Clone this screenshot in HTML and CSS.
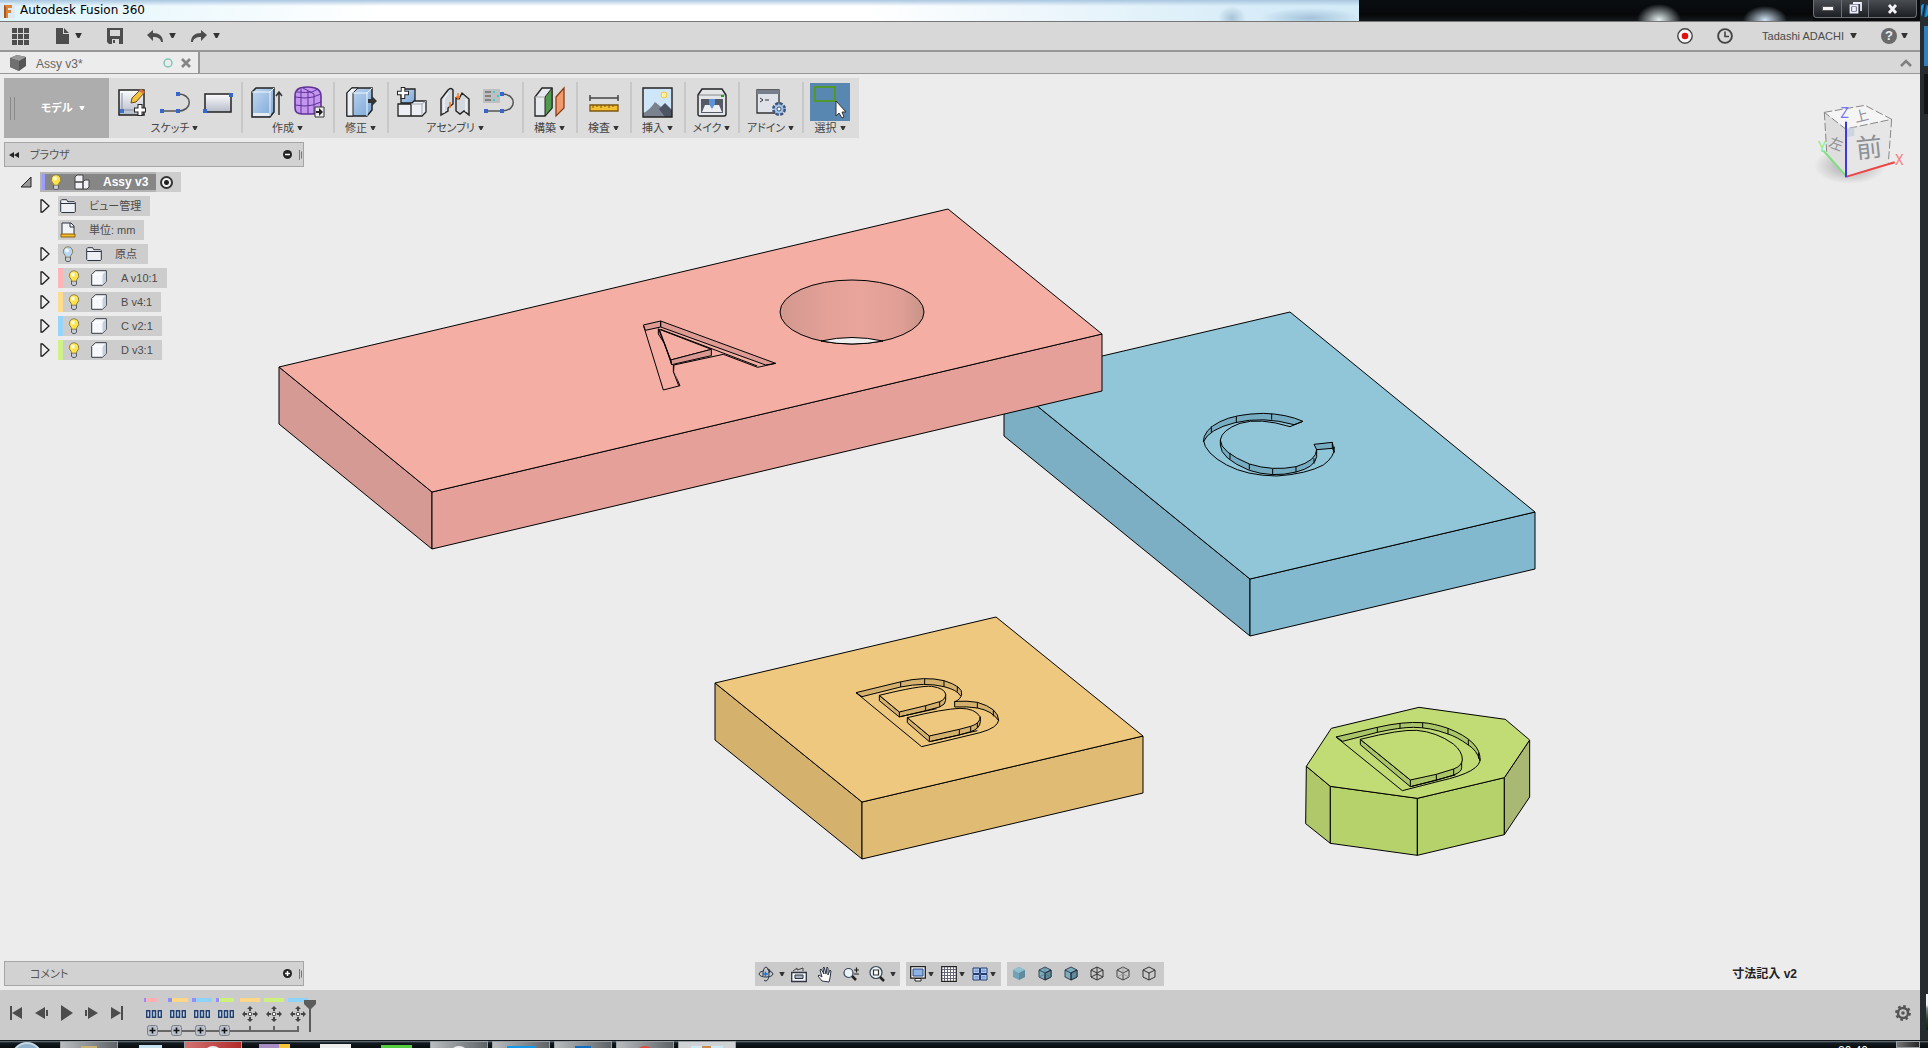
FILE: index.html
```html
<!DOCTYPE html>
<html lang="ja">
<head>
<meta charset="utf-8">
<title>Autodesk Fusion 360</title>
<link rel="stylesheet" href="styles.css">
</head>
<body>
<svg class="defs" aria-hidden="true">
  <defs>
    <linearGradient id="blueG" x1="0" y1="0" x2="1" y2="1"><stop offset="0" stop-color="#c3d9f0"/><stop offset="1" stop-color="#7ba6d8"/></linearGradient>
    <linearGradient id="greyG" x1="0" y1="0" x2="0" y2="1"><stop offset="0" stop-color="#fdfdfe"/><stop offset="1" stop-color="#b4bac8"/></linearGradient>
    <linearGradient id="wallG" x1="0" x2="1"><stop offset="0" stop-color="#d3978e"/><stop offset=".3" stop-color="#e2a097"/><stop offset=".55" stop-color="#e9a59c"/><stop offset=".85" stop-color="#df9e95"/><stop offset="1" stop-color="#c79488"/></linearGradient>
    <radialGradient id="shadeG"><stop offset="0" stop-color="#777" stop-opacity=".6"/><stop offset="1" stop-color="#777" stop-opacity="0"/></radialGradient>
  </defs>
  <symbol id="caret" viewBox="0 0 8 6"><path d="M0 0h8L5 6H3z"/></symbol>
  <symbol id="bulb" viewBox="0 0 12 16"><path d="M3.500 10.500v3.500l1 1.500h3l1-1.500v-3.500z" fill="#c9ccd4" stroke="#555c6c"/><path d="M6 .7a4.800 4.800 0 0 0-3 8.500l1 2h4l1-2A4.800 4.800 0 0 0 6 .7z" fill="currentColor" stroke="#8b8156"/><circle cx="5" cy="4.500" r="2" fill="#fff" opacity=".8"/></symbol>
  <symbol id="body" viewBox="0 0 16 16"><path d="M.7 4.500 4.500.7h10.800v10.800l-3.800 3.800H.7z" fill="#f7f8fb" stroke="#333947" stroke-linejoin="round"/><path d="M11.500 4.500 15 1v10.500L11.500 15z" fill="#c9cedb"/><path d="M1.500 4.500h10" stroke="#fff"/></symbol>
  <symbol id="folder" viewBox="0 0 16 14"><path d="M.7 12.500V1.700L1.700.7h5l1 2h6.600l1 1v9l-1 .8H1.700z" fill="#eef0f5" stroke="#2c3340"/><path d="M1 4.500h14" stroke="#2c3340"/></symbol>
  <symbol id="twist" viewBox="0 0 10 14"><path d="M1 1h1.500L9 7l-6.500 6H1z" fill="#f0f0f0" stroke="#222" stroke-width="1.300"/></symbol>
  <symbol id="grip" viewBox="0 0 3 12"><path d="M.5 1v10M2.500 2.500v7" stroke="#777"/></symbol>
  <symbol id="hex" viewBox="0 0 14 15"><path d="M7 1 13 4v7l-6 3-6-3V4z"/></symbol>
  <symbol id="pattern" viewBox="0 0 16 8"><g fill="#b9d3f2" stroke="#26406e" stroke-width="1.400"><path d="M.7.7h3v6.500h-3zM6.500.7h3v6.500h-3zM12.300.7h3v6.500h-3z"/></g></symbol>
  <symbol id="move" viewBox="0 0 16 16"><path d="M8 0l3 3H5zM8 16l3-3H5zM0 8l3-3v6zM16 8l-3-3v6zM7 3h2v2H7zM7 11h2v2H7zM3 7h2v2H3zM11 7h2v2h-2z" fill="#444"/><circle cx="8" cy="8" r="1.800" fill="#fff" stroke="#444"/></symbol>
  <symbol id="plus" viewBox="0 0 11 11"><rect x=".5" y=".5" width="10" height="10" rx="2" fill="#b9bfcb" stroke="#7b7f88"/><path d="M5.500 2.500v6M2.500 5.500h6" stroke="#111" stroke-width="1.600"/></symbol>
</svg>

<div class="desktop">
<div class="window">
  <header class="titlebar">
    <svg class="logo" width="15" height="16" viewBox="0 0 15 16"><path d="M0 0h15v15H0z" fill="#dcebf3"/><path d="M4 2h8v3H8v2h3v3H8v5H4z" fill="#d9853b"/><path d="M4 2l2 2v11H4z" fill="#a9561f"/></svg>
    <h1>Autodesk Fusion 360</h1>
    <div class="glass"></div>
    <div class="winbtns">
      <button aria-label="最小化"><svg width="12" height="5"><path d="M.5.5h11v4H.500z" fill="#f4f4f8" stroke="#555"/></svg></button>
      <button aria-label="元に戻す"><svg width="13" height="13"><path d="M4 1h8v8M1.500 3.500h7v7h-7zM4 6h2v2H4z" fill="none" stroke="#eef" stroke-width="1.800"/></svg></button>
      <button class="close" aria-label="閉じる"><svg width="12" height="10"><path d="M2 1l7 8M9 1 2 9" stroke="#f4f4f8" stroke-width="2.800"/></svg></button>
    </div>
  </header>

  <div class="quickbar">
    <button aria-label="データパネル"><svg width="17" height="17"><path d="M0 0h5v5H0zM6 0h5v5H6zM12 0h5v5h-5zM0 6h5v5H0zM6 6h5v5H6zM12 6h5v5h-5zM0 12h5v5H0zM6 12h5v5H6zM12 12h5v5h-5z" fill="#4d4d4d"/></svg></button>
    <button class="q-file" aria-label="ファイル"><svg width="13" height="16"><path d="M0 0h7v6h6v10H0zM8 0l5 5H8z" fill="#4d4d4d"/></svg><svg class="c8"><use href="#caret"/></svg></button>
    <button class="q-save" aria-label="保存"><svg width="16" height="16"><path d="M0 0h16v16H2l-2-2z" fill="#4d4d4d"/><path d="M3 2h10v6H3zM5 11h7v5H5z" fill="#d9d9d9"/><path d="M6 12h2v3H6z" fill="#4d4d4d"/></svg></button>
    <button class="q-undo" aria-label="元に戻す"><svg width="16" height="12"><path d="M0 5l6-5v3c6 0 10 3 10 9h-2c0-3-3-5-8-5v4z" fill="#4d4d4d"/></svg><svg class="c8"><use href="#caret"/></svg></button>
    <button aria-label="やり直し"><svg width="16" height="12"><path d="M16 5l-6-5v3C4 3 0 6 0 12h2c0-3 3-5 8-5v4z" fill="#4d4d4d"/></svg><svg class="c8"><use href="#caret"/></svg></button>
    <span class="spacer"></span>
    <button aria-label="記録"><svg width="16" height="16"><circle cx="8" cy="8" r="7.200" fill="#f4f4f4" stroke="#444" stroke-width="1.400"/><circle cx="8" cy="8" r="3.300" fill="#e01010"/></svg></button>
    <button class="q-clock" aria-label="ジョブの状態"><svg width="16" height="16"><circle cx="8" cy="8" r="6.900" fill="none" stroke="#444" stroke-width="1.900"/><path d="M8 3.500V8.500h4" fill="none" stroke="#444" stroke-width="1.600"/></svg></button>
    <button class="q-user">Tadashi ADACHI<svg class="c8"><use href="#caret"/></svg></button>
    <button class="q-help" aria-label="ヘルプ"><span class="help">?</span><svg class="c8"><use href="#caret"/></svg></button>
  </div>

  <nav class="tabs">
    <div class="tab">
      <svg width="16" height="16"><path d="M0 3 7 0l9 2v9l-7 5-9-4z" fill="#555"/><path d="M0 3l7-3 9 2-7 4z" fill="#999"/><path d="M0 3l9 3v10l-9-4z" fill="#707070"/></svg>
      <a href="#">Assy v3*</a>
      <svg class="ring" width="10" height="10"><circle cx="5" cy="5" r="4" fill="none" stroke="#7cc9b6" stroke-width="1.500"/></svg>
      <button aria-label="タブを閉じる"><svg width="10" height="10"><path d="M1 1l8 8M9 1 1 9" stroke="#868686" stroke-width="2.700"/></svg></button>
    </div>
    <button class="collapse" aria-label="折りたたむ"><svg width="12" height="8"><path d="M1 7l5-5 5 5" fill="none" stroke="#808080" stroke-width="2.600"/></svg></button>
  </nav>

  <main class="canvas">
    <svg class="scene" viewBox="0 74 1920 916" aria-label="モデル">
      <g stroke="#000" stroke-width="1" stroke-linejoin="round">
        <path d="M1004 379l246 200v57l-246-200z" fill="#7cafc4"/>
        <path d="M1250 579l285-67v57l-285 67z" fill="#83b9cf"/>
        <path d="M1290 312l245 200-285 67-246-200z" fill="#90c6d8"/>
        <path d="M279 367l153 125v57L279 424z" fill="#d69a94"/>
        <path d="M432 492l670-158v57L432 549z" fill="#e5a199"/>
        <path d="M948 209l154 125-670 158-153-125z" fill="#f4aea4"/>
        <ellipse cx="852" cy="312" rx="72" ry="32" fill="url(#wallG)"/>
        <path d="M821 341q31-7 62 0-31 6-62 0z" fill="#efefef"/>
        <path d="M715 683l147 119v57L715 740z" fill="#d4b26e"/>
        <path d="M862 802l281-66v57l-281 66z" fill="#e0bb74"/>
        <path d="M996 617l147 119-281 66-147-119z" fill="#edc87e"/>
      </g>
      <g class="fine" transform="translate(620 190) scale(.33333)" fill="none" stroke="#000" stroke-linejoin="round">
        <path d="M122 393 467 520 437 525 122 411zM70 405l52-12v18l-46 10z" fill="#dd9b94"/>
        <path d="M70 405 130 600l50-13-19-42 1-20 148-32 103 39 54-12M118 418l156 60-122 32zM122 418l290 110"/>
        <path d="M152 510l122-32v19l-119 27zM115 416v16l18 28 22 64-3-14zM160 524v21l16 42" fill="#d99992"/>
      </g>
      <g class="fine" transform="translate(840 660) scale(.33333)" fill="none" stroke="#000" stroke-linejoin="round">
        <path d="M48 98 180 66Q254 48 312 62 370 80 365 103L361 107Q352 90 312 80 255 66 182 81L66 110zM344 124q40-2 68 3 64 18 64 55-20-30-64-38-30-5-68-3z" fill="#d4b26e"/>
        <path d="M48 98 245 260 420 218Q474 203 476 180M365 103Q362 118 344 126M182 66v15M254 56v16M312 62v18M352 81v14M412 127v18M460 151v18"/>
        <path d="M118 106v16l60 49 79-19 42-11q18-8 18-20v-18L178 156zM202 173v15l66 57 90-20 34-10q28-9 29-30v-14L268 228z" fill="#d4b26e"/>
        <path d="M118 106Q240 76 275 79 315 85 317 103 317 118 299 125L257 137 178 156zM202 173Q310 147 360 145 405 145 420 170 422 190 392 199L358 208 268 228z" fill="#edc87e"/>
        <path d="M178 156v15M257 137v15M299 125v16M268 228v17M358 208v17M392 199v16M412 188v16M184 169 290 146M274 244 412 212"/>
      </g>
      <g class="fine" transform="translate(1180 390) scale(.33333)" fill="none" stroke="#000" stroke-linejoin="round">
        <path d="M369 94Q320 72 250 70 165 72 120 95 70 120 70 156 85 118 165 98 250 78 342 104zM402 163l55-6 6 30-6-12-47 4zM121 150q0 36 87 72 69 22 140 8 62-18 62-52v22q-5 32-62 46-70 18-140-5-87-36-87-76z" fill="#77adc2"/>
        <path d="M70 150q5 40 70 75 60 32 150 33 90-6 140-33 35-25 33-55M121 150q4-30 59-50 60-18 150 10l39-16M94 109v18M169 79v18M275 71v18M150 189v18M208 222v17M278 236v18M348 230v17M402 205v16M457 157v18"/>
      </g>
      <g class="fine" transform="translate(1290 690) scale(.33333)" fill="none" stroke="#000" stroke-linejoin="round">
        <path d="M49 229l72 60v171l-74-59z" fill="#b0c86a"/>
        <path d="M121 289l261 36v171l-261-36zM382 325l261-62v171l-261 62z" fill="#b5d26b"/>
        <path d="M643 263l76-113v171l-76 113z" fill="#a9b873"/>
        <path d="M387 52l259 36 73 62-76 113-261 62-261-36-72-60 75-114z" fill="#c1db75"/>
        <path d="M138 141 262 112Q340 94 398 98 430 100 474 115 575 155 570 212 560 180 535 165 500 140 474 132 420 112 370 112 330 112 262 127L158 154z" fill="#abc668"/>
        <path d="M138 141 337 302 450 273Q575 245 570 205M262 112v16M330 99v16M398 98v16M474 115v18M535 149v17M566 188v18"/>
        <path d="M211 148v16l150 126 78-19 52-16q24-9 24-22v-25L361 270z" fill="#abc668"/>
        <path d="M211 148Q330 118 380 121 440 126 490 162 518 185 517 210 515 228 491 237L439 253 361 270z" fill="#c1db75"/>
        <path d="M361 270v20M439 253v18M491 237v18M366 289l130-34"/>
      </g>
      <g class="viewcube">
        <ellipse cx="1850" cy="166" rx="36" ry="18" fill="url(#shadeG)"/>
        <g transform="translate(1560 0) scale(.33333)">
          <path d="M793 337l122-21 80 42-138 29z" fill="#f5f5f5"/><path d="M793 337l64 50v143l-57-75z" fill="#dedede"/><path d="M857 387l138-29-10 129-128 43z" fill="#e6e6e6"/>
          <path d="M793 337l122-21 80 42-138 29zM793 337l7 118M995 358l-10 129" fill="none" stroke="#888" stroke-width="3" stroke-dasharray="24 8"/>
          <path d="M860 387l23-5v25l-23 5z" fill="#cfd5dd"/>
          <path d="M860 530 790 452" stroke="#7be07b" stroke-width="6"/><path d="M860 530l144-43" stroke="#e44" stroke-width="6"/><path d="M858 532V365" stroke="#3a3ae0" stroke-width="6"/>
        </g>
        <g class="cubetext" fill="#8d9096">
          <text x="1856" y="157" font-size="26" transform="rotate(-6 1869 148)">前</text><text x="1829" y="149" font-size="14" transform="rotate(20 1836 144)">左</text><text x="1854" y="121" font-size="14" transform="rotate(-14 1861 115)">上</text>
          <text x="1840" y="118" font-size="15" fill="#7777f5">Z</text><text x="1818" y="152" font-size="15" fill="#85ef85">Y</text><text x="1895" y="165" font-size="15" fill="#f58080">X</text>
        </g>
      </g>
    </svg>

    <div class="overlay">
      <div class="toolbar">
        <button class="workspace"><svg width="5" height="23"><path d="M.5 0v23M4.500 0v23" stroke="#8a8a8a"/></svg><span>モデル</span><svg class="c6"><use href="#caret"/></svg></button>
        <section class="g134"><div class="icons">
          <button aria-label="スケッチを作成"><svg width="30" height="30"><path d="M2 3h25v25H2z" fill="url(#greyG)" stroke="#222" stroke-width="1.500"/><path d="M5 6v17h15" fill="none" stroke="#8a8fa0"/><path d="M3 22h4v4H3z" fill="#3a72d0"/><path d="M14 16l1-5L24 2l4 3-9 10z" fill="#f3c33f" stroke="#6b4a12"/><path d="M24 2l4 3-2 2-4-3z" fill="#d4704c"/><path d="M23 17v12M17 23h12" stroke="#222" stroke-width="5"/><path d="M23 18v10M18 23h10" stroke="#fff" stroke-width="3"/></svg></button>
          <button aria-label="線分"><svg width="30" height="30"><path d="M2 24h16c15 0 15-17 0-17" fill="none" stroke="#555" stroke-width="1.500"/><path d="M0 22h4v4H0zM16 22h4v4h-4zM16 5h4v4h-4z" fill="#3467cf"/></svg></button>
          <button aria-label="長方形"><svg width="30" height="30"><path d="M2 7h26v18H2z" fill="url(#greyG)" stroke="#222" stroke-width="1.500"/><path d="M0 22h4v4H0zM26 6h4v4h-4z" fill="#3467cf"/></svg></button>
        </div><button class="menu">スケッチ<svg class="c6"><use href="#caret"/></svg></button></section>
        <section class="g92"><div class="icons">
          <button aria-label="押し出し"><svg width="30" height="30"><path d="M1 5l4-4h18v24l-4 5H1z" fill="url(#blueG)" stroke="#222" stroke-width="1.500"/><path d="M1 5h18v24M19 5l4-4" fill="none" stroke="#f0f6fc"/><path d="M2 26h16v3H2z" fill="#e8ebf0"/><path d="M28 28V6M25 9l3-4 3 4" fill="none" stroke="#333" stroke-width="1.500"/></svg></button>
          <button aria-label="フォーム"><svg width="30" height="30"><path d="M6 1q8-2 15 0 6 2 6 8v12q-1 6-8 6H8q-7 0-7-6V9q0-6 5-8z" fill="#c596f0" stroke="#5c3297" stroke-width="1.600"/><path d="M1 10q11 2 18 0l8-3M1 18q11 2 18 0l8-3M7 2v25M14 4v23M20 7v20M3 5q9 1 15 0l6-3M9 1l11 6" fill="none" stroke="#5c3297"/><path d="M21 20h9v10h-9z" fill="#eee" stroke="#333"/><path d="M22 24h3v-3l4 4-4 4v-3h-3z" fill="#222"/></svg></button>
        </div><button class="menu">作成<svg class="c6"><use href="#caret"/></svg></button></section>
        <section class="g54"><div class="icons">
          <button aria-label="プレス/プル"><svg width="30" height="30"><path d="M1 6l5-5h20v22l-5 6H1z" fill="url(#blueG)" stroke="#222" stroke-width="1.500"/><path d="M1 6l5-5 6 0-5 5v23H1z" fill="#eceff3" stroke="#222"/><path d="M7 6h14v23M21 6l5-5" fill="none" stroke="#f0f6fc"/><path d="M22 12h4V9l5 5-5 5v-3h-4z" fill="#333"/></svg></button>
        </div><button class="menu">修正<svg class="c6"><use href="#caret"/></svg></button></section>
        <section class="g135"><div class="icons">
          <button aria-label="新規コンポーネント"><svg width="30" height="30"><path d="M4 15V5l3-3h11v14H4z" fill="url(#blueG)" stroke="#222" stroke-width="1.300"/><path d="M1 17h13v12H1zM14 17l3-3h12v11l-4 4H14z" fill="#eceef3" stroke="#222" stroke-width="1.300"/><path d="M14 17h11v11M25 17l4-3" fill="none" stroke="#a0a6b4"/><path d="M6 0v12M0 6h12" stroke="#222" stroke-width="4.500"/><path d="M6 1v10M1 6h10" stroke="#fff" stroke-width="2.600"/></svg></button>
          <button aria-label="ジョイント"><svg width="30" height="30"><path d="M1 28V12L8 3q3-3 5 0v14l-5 4v3zM29 28V12l-7-6-3 6-3-1v13l4 3 4-3z" fill="#d4d9e0" stroke="#222" stroke-width="1.400"/><path d="M4 26V12l4-6M26 25V12" stroke="#fff" fill="none"/><path d="M10 15v6M18 6v7M16 10h4" stroke="#f47a1c" stroke-width="1.500"/></svg></button>
          <button aria-label="モーションリンク"><svg width="30" height="30"><path d="M0 2h17v14H0z" fill="#bfbfbf"/><path d="M2 5h6M2 9h6M2 13h6" stroke="#444"/><path d="M10 5h2m2 4h2m-6 4h2" stroke="#29d3e0" stroke-width="2"/><path d="M3 24h16c15 0 15-17 0-17" fill="none" stroke="#555" stroke-width="1.500"/><path d="M1 22h4v4H1zM17 22h4v4h-4zM17 5h4v4h-4z" fill="#3467cf"/></svg></button>
        </div><button class="menu">アセンブリ<svg class="c6"><use href="#caret"/></svg></button></section>
        <section class="g54"><div class="icons">
          <button aria-label="オフセット平面"><svg width="32" height="30"><path d="M1 10l7-9h10v20l-7 8H1z" fill="#e6e9ee" stroke="#222" stroke-width="1.300"/><path d="M11 10l7-9v20l-7 8z" fill="#4f9a4c" stroke="#222"/><path d="M1 10h10" stroke="#aaa"/><path d="M22 10l8-9v20l-8 8z" fill="#f19a6b" stroke="#8a3d14" stroke-width="1.300"/></svg></button>
        </div><button class="menu">構築<svg class="c6"><use href="#caret"/></svg></button></section>
        <section class="g54"><div class="icons">
          <button aria-label="計測"><svg width="30" height="30"><path d="M1 11h28M1 8v6M29 8v6" stroke="#444" stroke-width="1.500"/><path d="M1 18h28v6H1z" fill="#f2bf31" stroke="#7d5710" stroke-width="1.300"/><path d="M4 18v3M8 18v2M12 18v3M16 18v2M20 18v3M24 18v2" stroke="#7d5710"/></svg></button>
        </div><button class="menu">検査<svg class="c6"><use href="#caret"/></svg></button></section>
        <section class="g54"><div class="icons">
          <button aria-label="デカール"><svg width="31" height="31"><path d="M1 1h29v29H1z" fill="#cfe6f8"/><circle cx="22" cy="8" r="3" fill="#fff3a0" stroke="#f0c541"/><path d="M1 26q6-2 12-11 8 6 17 15H1z" fill="#7b828f"/><path d="M17 22l6-6 7 7v7h-7z" fill="#4d5564"/><path d="M1 1h29v29H1z" fill="none" stroke="#222" stroke-width="1.400"/></svg></button>
        </div><button class="menu">挿入<svg class="c6"><use href="#caret"/></svg></button></section>
        <section class="g54"><div class="icons">
          <button aria-label="3Dプリント"><svg width="30" height="30"><path d="M1 8l4-6h20l4 6v19q0 2-2 2H3q-2 0-2-2z" fill="#e3e5e9" stroke="#222" stroke-width="1.400"/><path d="M2 8h26" stroke="#888"/><path d="M24 8h3v2h-3z" fill="#19a619"/><path d="M4 12h22v14H4z" fill="#555b66"/><path d="M8 18h14l3 7H5z" fill="#eceef2"/><path d="M12 12h6v5l-3 5-3-5z" fill="#5a95da"/></svg></button>
        </div><button class="menu">メイク<svg class="c6"><use href="#caret"/></svg></button></section>
        <section class="g64"><div class="icons">
          <button aria-label="スクリプトとアドイン"><svg width="30" height="30"><path d="M1 3h22v23H1z" fill="#dfe2e8" stroke="#333" stroke-width="1.300"/><path d="M1 3h22v4H1z" fill="#787f8c"/><path d="M4 11l3 2-3 2M9 13h4" fill="none" stroke="#333"/><circle cx="23" cy="22" r="5.500" fill="#a6c3e6" stroke="#3a557e" stroke-width="3" stroke-dasharray="3 1.300"/><circle cx="23" cy="22" r="4.500" fill="#a6c3e6"/><circle cx="23" cy="22" r="2" fill="#fff" stroke="#3a557e"/></svg></button>
        </div><button class="menu">アドイン<svg class="c6"><use href="#caret"/></svg></button></section>
        <section class="g55"><div class="icons">
          <button class="selected" aria-label="選択"><svg width="40" height="38"><path d="M5 4h20v14H5z" fill="none" stroke="#4ea000" stroke-width="1.600"/><path d="M26 18v15l3-3 3 5 2-1-2-5h4z" fill="#fff" stroke="#333"/></svg></button>
        </div><button class="menu">選択<svg class="c6"><use href="#caret"/></svg></button></section>
      </div>

      <div class="panel">
        <svg width="10" height="6"><path d="M5 0v6L0 3zM10 0v6L5 3z" fill="#222"/></svg><span>ブラウザ</span>
        <button aria-label="閉じる"><svg width="9" height="9"><circle cx="4.500" cy="4.500" r="4.500" fill="#222"/><path d="M2 4.500h5" stroke="#fff" stroke-width="1.500"/></svg></button><svg class="grip"><use href="#grip"/></svg>
      </div>

      <ul class="tree">
        <li class="root"><svg class="tri" width="12" height="12"><path d="M11 1v10H1z" fill="#999" stroke="#222"/></svg><div class="rootbox"><span class="dark"><i class="strip violet"></i><svg class="bulb"><use href="#bulb"/></svg><svg width="16" height="16"><path d="M1 3l2-2h6v7H1zM1 8h8v7H1zM9 8l2-2h4v7l-2 2H9z" fill="#f1f2f6" stroke="#444"/></svg><b>Assy v3</b></span><label class="activate"><input type="radio" checked aria-label="アクティブ化"></label></div></li>
        <li><svg class="twist"><use href="#twist"/></svg><div class="node"><svg class="folder"><use href="#folder"/></svg><span>ビュー管理</span></div></li>
        <li><i class="twist"></i><div class="node"><svg width="16" height="16"><path d="M2 13V1h9l3 3v9z" fill="#f2f3f7" stroke="#2c3340"/><path d="M10 1v4h4" fill="none" stroke="#2c3340"/><path d="M1 12h14v3H1z" fill="#f2bf31" stroke="#8b5d0b"/></svg><span>単位: mm</span></div></li>
        <li><svg class="twist"><use href="#twist"/></svg><div class="node wide"><svg class="bulb off"><use href="#bulb"/></svg><svg class="folder"><use href="#folder"/></svg><span>原点</span></div></li>
        <li><svg class="twist"><use href="#twist"/></svg><div class="node comp"><i class="strip pink"></i><svg class="bulb"><use href="#bulb"/></svg><svg class="cube"><use href="#body"/></svg><span>A v10:1</span></div></li>
        <li><svg class="twist"><use href="#twist"/></svg><div class="node comp"><i class="strip orange"></i><svg class="bulb"><use href="#bulb"/></svg><svg class="cube"><use href="#body"/></svg><span>B v4:1</span></div></li>
        <li><svg class="twist"><use href="#twist"/></svg><div class="node comp"><i class="strip sky"></i><svg class="bulb"><use href="#bulb"/></svg><svg class="cube"><use href="#body"/></svg><span>C v2:1</span></div></li>
        <li><svg class="twist"><use href="#twist"/></svg><div class="node comp"><i class="strip lime"></i><svg class="bulb"><use href="#bulb"/></svg><svg class="cube"><use href="#body"/></svg><span>D v3:1</span></div></li>
      </ul>

      <div class="bottomrow">
        <div class="panel comment"><span>コメント</span><button aria-label="開く"><svg width="9" height="9"><circle cx="4.500" cy="4.500" r="4.500" fill="#222"/><path d="M2 4.500h5M4.500 2v5" stroke="#fff" stroke-width="1.500"/></svg></button><svg class="grip"><use href="#grip"/></svg></div>
        <div class="navbar">
          <div class="navgroup first">
            <button aria-label="オービット"><svg width="16" height="16" fill="none" stroke="#2d3544" stroke-width="1"><path d="M5 5Q1 6 1 8q1 3 7 3t7-3q0-2-4-3M6 14q1 1 2 1 3-1 3-7T8 1Q6 1 5 6v4"/><path d="M9 3l3 1-1 3"/><path d="M5 8h5M7.500 5.500v5" stroke="#1a73d6" stroke-width="1.500"/></svg><svg class="c6"><use href="#caret"/></svg></button>
            <button aria-label="ビュー正面"><svg width="16" height="16"><path d="M2 5l4-3v2l6-2v3" fill="none" stroke="#444"/><path d="M.7 6.500h14.600v9H.7z" fill="#f4f4f8" stroke="#2d3544" stroke-width="1.300"/><path d="M4 9h8v3.500H4z" fill="#aab0bd" stroke="#2d3544"/></svg></button>
            <button aria-label="画面移動"><svg width="16" height="16"><path d="M5 15 1 10l1-1 3 2-2-7 1-1 3 5L6 2l1-1 2 7 1-7 1 1v7l2-5 1 1-1 7-1 4z" fill="#fff" stroke="#2d3544"/></svg></button>
            <button aria-label="ズーム"><svg width="16" height="16"><circle cx="5.500" cy="7" r="4.500" fill="#e8f4f6" stroke="#3a4454" stroke-width="1.200"/><path d="M9 10l4 4" stroke="#222" stroke-width="2.500"/><path d="M11 4h5M13.500 1.500v5M11 8h5" stroke="#222" stroke-width="1.200"/></svg></button>
            <button aria-label="フィット"><svg width="16" height="16"><circle cx="7" cy="6.500" r="6" fill="#e8f4f6" stroke="#3a4454" stroke-width="1.200"/><path d="M4.500 4h5v5h-5z" fill="#fff" stroke="#333" stroke-width="1.200"/><path d="M11 11l4 4" stroke="#222" stroke-width="2.500"/></svg><svg class="c6"><use href="#caret"/></svg></button>
          </div>
          <div class="navgroup second">
            <button aria-label="表示設定"><svg width="16" height="16"><path d="M.7.7h14.600v11.500H.7z" fill="#f4f4f8" stroke="#222" stroke-width="1.300"/><path d="M3 3h10v7H3z" fill="#8db2e4" stroke="#2b4d85"/><path d="M5 12.500h6v2.500H5z" fill="#fff" stroke="#222"/></svg><svg class="c6"><use href="#caret"/></svg></button>
            <button aria-label="グリッド"><svg width="16" height="16"><path d="M.7.7h14.600v14.600H.7z" fill="#fff" stroke="#222" stroke-width="1.200"/><path d="M3.500 1v14M6.500 1v14M9.500 1v14M12.500 1v14M1 3.500h14M1 6.500h14M1 9.500h14M1 12.500h14" stroke="#667"/></svg><svg class="c6"><use href="#caret"/></svg></button>
            <button aria-label="ビューポート"><svg width="16" height="16"><path d="M1 2h6.500v5.500H1zM8.500 2H15v5.500H8.500zM1 8.500h6.500V14H1zM8.500 8.500H15V14H8.500z" fill="#b5cff2" stroke="#233c70" stroke-width="1"/><path d="M3 4h3v1.500H3zM10 4h3v1.500h-3zM3 10.500h3V12H3zM10 10.500h3V12h-3z" stroke="#7c9cd0" fill="none"/></svg><svg class="c6"><use href="#caret"/></svg></button>
          </div>
          <div class="navgroup third">
            <button aria-label="シェーディング"><svg width="14" height="15"><path d="M7 1l6 3v7l-6 3-6-3V4z" fill="#6fa3b5"/><path d="M7 1l6 3-6 3-6-3z" fill="#8fc1d1"/><path d="M13 4v7l-6 3V7z" fill="#5f8b9c"/></svg></button>
            <button aria-label="隠線付きシェーディング"><svg width="14" height="15" stroke="#223" stroke-width=".8"><path d="M7 1l6 3v7l-6 3-6-3V4z" fill="#7aaebf"/><path d="M13 4v7l-6 3V7z" fill="#5f8b9c"/><path d="M1 4l6 3 6-3M7 7v7" fill="none"/><path d="M7 1v6M1 11l6-3 6 3" stroke="#4a7686" fill="none"/></svg></button>
            <button aria-label="エッジ付きシェーディング"><svg width="14" height="15" stroke="#223" stroke-width=".8"><path d="M7 1l6 3v7l-6 3-6-3V4z" fill="#7aaebf"/><path d="M13 4v7l-6 3V7z" fill="#5f8b9c"/><path d="M1 4l6 3 6-3M7 7v7" fill="none"/></svg></button>
            <button aria-label="ワイヤフレーム"><svg width="14" height="15" fill="none" stroke="#333"><use href="#hex"/><path d="M1 4l6 3 6-3M7 1v13M1 11l6-3 6 3"/></svg></button>
            <button aria-label="隠線付きワイヤフレーム"><svg width="14" height="15" fill="none" stroke="#444"><use href="#hex"/><path d="M1 4l6 3 6-3M7 7v7"/><path d="M7 1v6M1 11l6-3 6 3" stroke="#999"/></svg></button>
            <button aria-label="エッジ付きワイヤフレーム"><svg width="14" height="15" fill="none" stroke="#333"><use href="#hex"/><path d="M1 4l6 3 6-3M7 7v7"/></svg></button>
          </div>
        </div>
        <div class="status">寸法記入 v2</div>
      </div>
    </div>
  </main>

  <footer class="timeline">
    <div class="play">
      <button aria-label="先頭へ"><svg width="13" height="14"><path d="M0 0h2v14H0zM12 1v12L2 7z"/></svg></button>
      <button aria-label="戻る"><svg width="13" height="14"><path d="M10 1v12L0 7zM11 4h2v6h-2z"/></svg></button>
      <button aria-label="再生"><svg width="13" height="16"><path d="M1 0l12 8-12 8z"/></svg></button>
      <button aria-label="進む"><svg width="13" height="14"><path d="M3 1v12l10-6zM0 4h2v6H0z"/></svg></button>
      <button aria-label="末尾へ"><svg width="13" height="14"><path d="M11 0h2v14h-2zM1 1v12l10-6z"/></svg></button>
    </div>
    <div class="track">
      <button aria-label="A"><svg><path d="M0 8h2v4H0z" fill="#8f8fff"/><path d="M2 8h12v4H2z" fill="#ffb0b4"/><path d="M14 40h10v2H14z" fill="#666"/><use href="#pattern" x="2" y="20" width="16" height="8"/><use href="#plus" x="3" y="35" width="11" height="11"/></svg></button>
      <button aria-label="B"><svg><path d="M0 8h4v4H0z" fill="#8f8fff"/><path d="M4 8h16v4H4z" fill="#ffd787"/><path d="M0 40h24v2H0z" fill="#666"/><use href="#pattern" x="2" y="20" width="16" height="8"/><use href="#plus" x="3" y="35" width="11" height="11"/></svg></button>
      <button aria-label="C"><svg><path d="M0 8h4v4H0z" fill="#8f8fff"/><path d="M4 8h16v4H4z" fill="#8fd2fa"/><path d="M0 40h24v2H0z" fill="#666"/><use href="#pattern" x="2" y="20" width="16" height="8"/><use href="#plus" x="3" y="35" width="11" height="11"/></svg></button>
      <button aria-label="D"><svg><path d="M0 8h3v4H0z" fill="#8f8fff"/><path d="M3 8h15v4H3z" fill="#cdf07c"/><path d="M0 40h24v2H0z" fill="#666"/><use href="#pattern" x="2" y="20" width="16" height="8"/><use href="#plus" x="3" y="35" width="11" height="11"/></svg></button>
      <button aria-label="移動 B"><svg><path d="M0 8h20v4H0z" fill="#ffd787"/><path d="M0 40h9v-4h2v4h13v2H0z" fill="#666"/><use href="#move" x="2" y="16" width="16" height="16"/></svg></button>
      <button aria-label="移動 D"><svg><path d="M0 8h20v4H0z" fill="#cdf07c"/><path d="M0 40h9v-4h2v4h13v2H0z" fill="#666"/><use href="#move" x="2" y="16" width="16" height="16"/></svg></button>
      <button aria-label="移動 C"><svg><path d="M0 8h20v4H0z" fill="#8fd2fa"/><path d="M0 40h9v-4h2v6H0z" fill="#666"/><use href="#move" x="2" y="16" width="16" height="16"/><path d="M16 10h12v4l-5 5v23h-2V19l-5-5z" fill="#5c5c5c"/></svg></button>
    </div>
    <button class="gear" aria-label="設定"><svg width="16" height="16"><circle cx="8" cy="8" r="5" fill="none" stroke="#555" stroke-width="2.500"/><circle cx="8" cy="8" r="6.800" fill="none" stroke="#555" stroke-width="2.200" stroke-dasharray="2.700 2.640"/><circle cx="8" cy="8" r="1.800" fill="#555"/></svg></button>
  </footer>
</div>

<aside class="side"><i class="bird"></i><i class="blue"></i><i class="black"></i><i class="photo"></i></aside>

<footer class="taskbar">
  <i class="orb"></i><i class="task"><b class="yellow"></b></i><i class="ico pale"></i><i class="task red"><b class="round white"></b></i><i class="ico duo"></i><i class="ico white"></i><i class="ico green"></i>
  <i class="task"><b class="round white"></b></i><i class="task"><b class="azure"></b></i><i class="task"><b class="navy"></b></i><i class="task"><b class="round rose"></b></i><i class="task light"><b class="app"></b></i>
  <time>20:40</time><i class="show"></i>
</footer>
</div>
</body>
</html>
```
FILE: styles.css
```css
* { box-sizing: border-box; }
html, body { margin: 0; height: 100%; }
body { font-family: "Liberation Sans", "Noto Sans CJK JP", sans-serif; font-size: 11px; line-height: 16px; color: #444; overflow: hidden; }
button { display: flex; align-items: center; margin: 0; padding: 0; border: 0; background: none; font: inherit; color: inherit; }
svg { display: block; flex: none; overflow: visible; }
i, b { display: block; }
a { color: inherit; text-decoration: none; }
.defs { position: absolute; width: 0; height: 0; }
.c8 { width: 7px; height: 5px; fill: #333; }
.c6 { width: 6px; height: 4px; fill: #333; }

.desktop { height: 100%; display: grid; grid-template: minmax(0, 1fr) 8px / minmax(0, 1fr) 8px; background: #262b30; }
.window { display: flex; flex-direction: column; background: #ececec; }

.titlebar { display: flex; align-items: flex-start; height: 22px; border-bottom: 1px solid #777; background: radial-gradient(ellipse 14px 12px at 1232px 18px, #a9c4d8, transparent), radial-gradient(ellipse 50px 10px at 1310px 18px, #a4c3da, transparent), linear-gradient(#a9c6e0, transparent 6px), linear-gradient(90deg, #dff4fc, #fff 20%, #fff 45%, #d6ecf8 66%, #bcdcf0); }
.titlebar .logo { margin-top: 3px; }
h1 { margin: 1px 0 0 5px; font: 12px/18px "DejaVu Sans", sans-serif; color: #000; flex: 1; }
.glass { width: 454px; height: 21px; background: radial-gradient(ellipse 22px 16px at 300px 20px, #e6f0f0, transparent), radial-gradient(ellipse 22px 14px at 406px 20px, #cfe2f4, transparent), linear-gradient(#0b0e11, #06080a 70%, #16191c); }
.winbtns { display: flex; width: 107px; height: 21px; padding-bottom: 3px; background: #0a0c0f; }
.winbtns button { width: 29px; border: 1px solid #6b6f74; border-top: 0; background: linear-gradient(#4a4e53, #1b1e22); justify-content: center; border-radius: 0 0 0 4px; }
.winbtns button + button { width: 27px; border-left: 0; border-radius: 0; }
.winbtns button.close { width: 48px; border-radius: 0 0 4px 0; }

.quickbar { display: flex; align-items: center; height: 30px; padding: 0 12px; background: #d8d8d8; border-bottom: 2px solid #979797; color: #4a4a4a; }
.quickbar button { gap: 6px; }
.quickbar button svg.c8 { margin-bottom: 2px; }
.quickbar .q-file { margin-left: 27px; }
.quickbar .q-save { margin: 0 24px 0 25px; }
.quickbar .q-undo { margin-right: 15px; }
.spacer { flex: 1; }
.quickbar .q-clock { margin: 0 29px 0 24px; }
.quickbar .q-help { margin-left: 24px; gap: 4px; }
.help { width: 16px; height: 16px; border-radius: 8px; background: #6a6a6a; color: #eee; font-weight: bold; font-size: 13px; text-align: center; }

.tabs { display: flex; justify-content: space-between; height: 22px; background: #d8d8d8; border-bottom: 1px solid #979797; }
.tab { display: flex; align-items: center; width: 200px; padding: 0 7px 0 10px; background: #ececec; border-right: 2px solid #979797; color: #666; font-size: 12px; }
.tab a { flex: 1; padding: 3px 0 0 10px; }
.ring { margin-right: 8px; }
.collapse { margin-right: 8px; }

.canvas { flex: 1; min-height: 0; display: grid; grid-template: minmax(0, 1fr) / minmax(0, 1fr); }
.scene, .overlay { grid-area: 1 / 1; }
.scene { width: 100%; height: 100%; }
.fine path { vector-effect: non-scaling-stroke; }
.cubetext { font-family: "Noto Sans CJK JP", sans-serif; }
.overlay { position: relative; display: flex; flex-direction: column; align-items: flex-start; padding: 4px 0 4px 4px; }

.toolbar { display: flex; height: 60px; background: #dcdcdc; font-feature-settings: "palt"; }
.workspace { width: 105px; padding-left: 6px; background: #adadad; color: #fff; font-weight: bold; }
.workspace span { margin: 0 6px 0 26px; }
.workspace .c6 { fill: #fff; }
.toolbar section { padding: 4px 3px 0 0; display: flex; flex-direction: column; align-items: center; background: linear-gradient(#c8c8c8, #c8c8c8) right 4px / 2px 51px no-repeat; }
.toolbar section:last-child { background: none; }
.g134 { width: 134px; } .g92 { width: 92px; } .g54 { width: 54px; } .g135 { width: 135px; } .g64 { width: 64px; } .g55 { width: 55px; }
.icons { display: flex; align-items: center; gap: 13px; height: 40px; }
.menu { gap: 3px; height: 12px; white-space: nowrap; }
.selected { width: 40px; height: 38px; background: #5887b1; }

.panel { display: flex; align-items: center; width: 300px; height: 25px; margin-top: 4px; padding: 0 1px 0 4px; background: #d2d2d2; border: 1px solid #a6a6a6; font-feature-settings: "palt"; color: #555; }
.panel span { flex: 1; padding-left: 11px; }
.grip { width: 3px; height: 12px; margin-left: 7px; }
.comment { margin: 0; }
.comment span { padding-left: 21px; }

.tree { list-style: none; margin: 5px 0 0; padding: 0 0 0 36px; display: flex; flex-direction: column; gap: 4px; color: #4c4c4c; font-feature-settings: "palt"; }
.tree li { display: flex; align-items: center; height: 20px; }
.root { margin-left: -20px; }
.tri { margin-right: 8px; }
.rootbox { display: flex; height: 20px; background: #cdcdcd; }
.dark { display: flex; align-items: center; width: 116px; border: 2px solid #b4b4b4; border-right: 0; background: #868686; color: #fff; font-size: 12px; white-space: nowrap; }
.dark b { margin-left: 13px; }
.dark .bulb { margin: 0 12px 0 5px; }
.activate { display: flex; padding: 4px 8px 0 4px; }
.activate input { appearance: none; margin: 0; width: 13px; height: 13px; border: 2px solid #333; border-radius: 7px; background: radial-gradient(circle, #222 2px, #f4f4f4 3px); }
.twist { width: 10px; height: 14px; margin-right: 8px; }
.node { display: flex; align-items: center; height: 20px; background: #cdcdcd; padding: 0 9px 0 2px; }
.node span { margin-left: 13px; }
.node.wide { padding-right: 11px; }
.node.comp { padding: 0 9px 0 0; }
.comp .bulb { margin: 0 11px 0 5px; }
.comp span { margin-left: 14px; }
.wide .bulb { margin: 0 12px 0 2px; }
.bulb { width: 12px; height: 16px; color: #ffe54a; }
.off { color: #b9d6fb; }
.folder { width: 16px; height: 14px; }
.cube { width: 16px; height: 16px; }
.strip { align-self: stretch; width: 5px; }
.violet { width: 3px; background: #9c9cff; }
.pink { background: #ffb4b8; } .orange { background: #ffdb8e; } .sky { background: #96d5fa; } .lime { background: #d0f187; }

.bottomrow { margin-top: auto; align-self: stretch; display: grid; grid-template-columns: 1fr auto 1fr; align-items: center; padding-right: 5px; }
.navbar { display: flex; gap: 6px; }
.navgroup { display: flex; align-items: center; height: 24px; background: #cacaca; }
.first { padding: 0 4px 0 3px; gap: 10px; }
.first button { gap: 5px; }
.first button:first-child { margin-right: -4px; }
.second { padding: 0 5px 0 4px; gap: 7px; }
.second button { gap: 2px; }
.third { padding: 0 8px 0 5px; gap: 12px; }
.status { justify-self: end; padding-right: 118px; font-size: 12px; color: #222; font-weight: 600; font-feature-settings: "palt"; }

.timeline { display: flex; align-items: center; height: 50px; background: #cbcbcb; }
.play { display: flex; align-items: center; gap: 12px; width: 144px; padding: 0 0 4px 10px; fill: #4c4c4c; }
.track { display: flex; flex: 1; }
.track button, .track svg { width: 24px; height: 50px; }
.gear { margin-right: 9px; padding-bottom: 4px; }

.side { display: flex; flex-direction: column; align-items: flex-end; padding-top: 4px; }
.bird { width: 7px; height: 13px; border-radius: 3px; background: linear-gradient(100deg, #1d9bea 2px, #0d1a26 4px, #1d9bea 7px); }
.blue { width: 4px; height: 40px; margin-top: 9px; background: #2f80bf; }
.black { width: 4px; height: 40px; margin-top: 8px; background: #121415; }
.photo { width: 2px; height: 36px; margin: auto 0 10px; background: linear-gradient(#eef2f6 30%, #7c8a98 40%, #24401f 70%, #14200f); }

.taskbar { grid-column: 1 / -1; display: flex; height: 8px; overflow: hidden; background: linear-gradient(#14191d 1px, #7b868e 1px, #3a444b 2px, #131c22 3px, #070b0e); }
.taskbar i { flex: none; margin-top: 1px; }
.taskbar .orb { width: 32px; height: 32px; margin: 2px 17px 0 11px; border-radius: 16px; background: #8fb1cb; border: 2px solid #c9dbe6; }
.taskbar .task { width: 58px; height: 8px; margin-right: 4px; padding-top: 4px; background: linear-gradient(100deg, #b9bdc0, #5d6266); border: 1px solid #9a9fa3; border-bottom: 0; }
.task b { width: 16px; height: 12px; margin: 0 auto; }
.task .round { width: 20px; height: 20px; border-radius: 10px; }
.yellow { background: #c8b274; } .taskbar .white { background: #eee; } .rose { background: #e0483e; }
.azure { background: #1397ea; } .task .azure { width: 29px; } .navy { background: #0d6cc4; }
.taskbar .red { background: linear-gradient(100deg, #d37272, #b02a2a); margin: 1px 17px 0 5px; }
.taskbar .ico { width: 31px; height: 8px; margin: 4px 30px 0 0; }
.taskbar .pale { width: 23px; background: #c7e2f0; margin: 5px 17px 0 17px; }
.duo { background: linear-gradient(90deg, #a98cc4 66%, #f6c636 66%); }
.taskbar .green { background: #55cf3f; margin-right: 18px; margin-top: 5px; }
.taskbar .light { background: #d0d3d5; }
.task .app { width: 32px; background: linear-gradient(90deg, #cdeaf5 11px, #cc8a4c 11px, #cc8a4c 20px, #cdeaf5 20px); }
.taskbar .task.red { margin-right: 17px; }
time { margin: 3px 28px 0 auto; color: #fff; font-size: 12px; line-height: 16px; }
.show { width: 24px; margin-right: 8px; background: linear-gradient(100deg, #777, #222); border: 1px solid #9a9fa3; }
```
